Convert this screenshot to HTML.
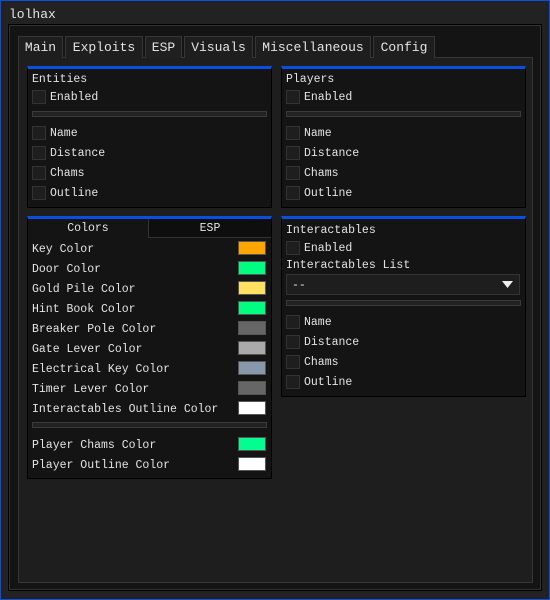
<!DOCTYPE html><html><head><style>
*{margin:0;padding:0;box-sizing:border-box}
body{width:550px;height:600px;background:#222;position:relative;overflow:hidden;font-family:"Liberation Mono",monospace;font-size:11.5px;color:#e4e4e4}
.a{position:absolute}
.t{position:absolute;line-height:14px;white-space:pre;margin-top:1px}
.cb{position:absolute;width:14px;height:14px;background:#1e1e1e;border:1px solid #333}
.sep{position:absolute;height:6px;background:#222;border:1px solid #3a3a3a}
.sw{position:absolute;width:28px;height:14px;border:1px solid #555}
.grp{position:absolute;background:#141414;border:1px solid #000;border-top:3px solid #0a4fe0}
.tab{position:absolute;top:36px;height:22px;background:#1e1e1e;border:1px solid #363636;border-bottom:none;line-height:21px;text-align:center;font-size:13px}
</style></head><body>
<div class="a" style="left:0;top:0;width:550px;height:600px;border:1px solid #0a4fe0"></div>
<div class="t" style="left:9px;top:7px;font-size:13px">lolhax</div>
<div class="a" style="left:9px;top:25px;width:532px;height:565px;background:#141414;border:1px solid #333;outline:1px solid #000"></div>
<div class="a" style="left:18px;top:57px;width:515px;height:526px;background:#1e1e1e;border:1px solid #363636"></div>
<div class="tab" style="left:18px;width:45px">Main</div>
<div class="tab" style="left:65px;width:78px">Exploits</div>
<div class="tab" style="left:145px;width:37px;background:#202020">ESP</div>
<div class="tab" style="left:184px;width:69px">Visuals</div>
<div class="tab" style="left:255px;width:116px">Miscellaneous</div>
<div class="tab" style="left:373px;width:62px">Config</div>

<div class="grp" style="left:27px;top:66px;width:245px;height:142px"></div>
<div class="grp" style="left:281px;top:66px;width:245px;height:142px"></div>
<div class="grp" style="left:27px;top:216px;width:245px;height:263px"></div>
<div class="grp" style="left:281px;top:216px;width:245px;height:181px"></div>

<div class="t" style="left:32px;top:72px">Entities</div>
<div class="cb" style="left:32px;top:90px"></div><div class="t" style="left:50px;top:90px">Enabled</div>
<div class="sep" style="left:32px;top:111px;width:235px"></div>
<div class="cb" style="left:32px;top:126px"></div><div class="t" style="left:50px;top:126px">Name</div>
<div class="cb" style="left:32px;top:146px"></div><div class="t" style="left:50px;top:146px">Distance</div>
<div class="cb" style="left:32px;top:166px"></div><div class="t" style="left:50px;top:166px">Chams</div>
<div class="cb" style="left:32px;top:186px"></div><div class="t" style="left:50px;top:186px">Outline</div>

<div class="t" style="left:286px;top:72px">Players</div>
<div class="cb" style="left:286px;top:90px"></div><div class="t" style="left:304px;top:90px">Enabled</div>
<div class="sep" style="left:286px;top:111px;width:235px"></div>
<div class="cb" style="left:286px;top:126px"></div><div class="t" style="left:304px;top:126px">Name</div>
<div class="cb" style="left:286px;top:146px"></div><div class="t" style="left:304px;top:146px">Distance</div>
<div class="cb" style="left:286px;top:166px"></div><div class="t" style="left:304px;top:166px">Chams</div>
<div class="cb" style="left:286px;top:186px"></div><div class="t" style="left:304px;top:186px">Outline</div>

<div class="a" style="left:28px;top:219px;width:120px;height:19px;text-align:center;line-height:20px">Colors</div>
<div class="a" style="left:148px;top:219px;width:123px;height:19px;background:#0e0e0e;border-left:1px solid #333;border-bottom:1px solid #333;text-align:center;line-height:20px">ESP</div>
<div class="t" style="left:32px;top:242px">Key Color</div><div class="sw" style="left:238px;top:241px;background:#ffa500"></div>
<div class="t" style="left:32px;top:262px">Door Color</div><div class="sw" style="left:238px;top:261px;background:#00ff80"></div>
<div class="t" style="left:32px;top:282px">Gold Pile Color</div><div class="sw" style="left:238px;top:281px;background:#ffe060"></div>
<div class="t" style="left:32px;top:302px">Hint Book Color</div><div class="sw" style="left:238px;top:301px;background:#00ff80"></div>
<div class="t" style="left:32px;top:322px">Breaker Pole Color</div><div class="sw" style="left:238px;top:321px;background:#666"></div>
<div class="t" style="left:32px;top:342px">Gate Lever Color</div><div class="sw" style="left:238px;top:341px;background:#aaa"></div>
<div class="t" style="left:32px;top:362px">Electrical Key Color</div><div class="sw" style="left:238px;top:361px;background:#8898aa"></div>
<div class="t" style="left:32px;top:382px">Timer Lever Color</div><div class="sw" style="left:238px;top:381px;background:#666"></div>
<div class="t" style="left:32px;top:402px">Interactables Outline Color</div><div class="sw" style="left:238px;top:401px;background:#fff"></div>
<div class="sep" style="left:32px;top:422px;width:235px"></div>
<div class="t" style="left:32px;top:438px">Player Chams Color</div><div class="sw" style="left:238px;top:437px;background:#00ff90"></div>
<div class="t" style="left:32px;top:458px">Player Outline Color</div><div class="sw" style="left:238px;top:457px;background:#fff"></div>

<div class="t" style="left:286px;top:223px">Interactables</div>
<div class="cb" style="left:286px;top:241px"></div><div class="t" style="left:304px;top:241px">Enabled</div>
<div class="t" style="left:286px;top:258px">Interactables List</div>
<div class="a" style="left:286px;top:274px;width:234px;height:21px;background:#1e1e1e;border:1px solid #333"></div>
<div class="t" style="left:292px;top:278px">--</div>
<svg class="a" style="left:502px;top:281px" width="11" height="8"><path d="M0 0H11L5.5 7Z" fill="#eee"/></svg>
<div class="sep" style="left:286px;top:300px;width:235px"></div>
<div class="cb" style="left:286px;top:315px"></div><div class="t" style="left:304px;top:315px">Name</div>
<div class="cb" style="left:286px;top:335px"></div><div class="t" style="left:304px;top:335px">Distance</div>
<div class="cb" style="left:286px;top:355px"></div><div class="t" style="left:304px;top:355px">Chams</div>
<div class="cb" style="left:286px;top:375px"></div><div class="t" style="left:304px;top:375px">Outline</div>
</body></html>
